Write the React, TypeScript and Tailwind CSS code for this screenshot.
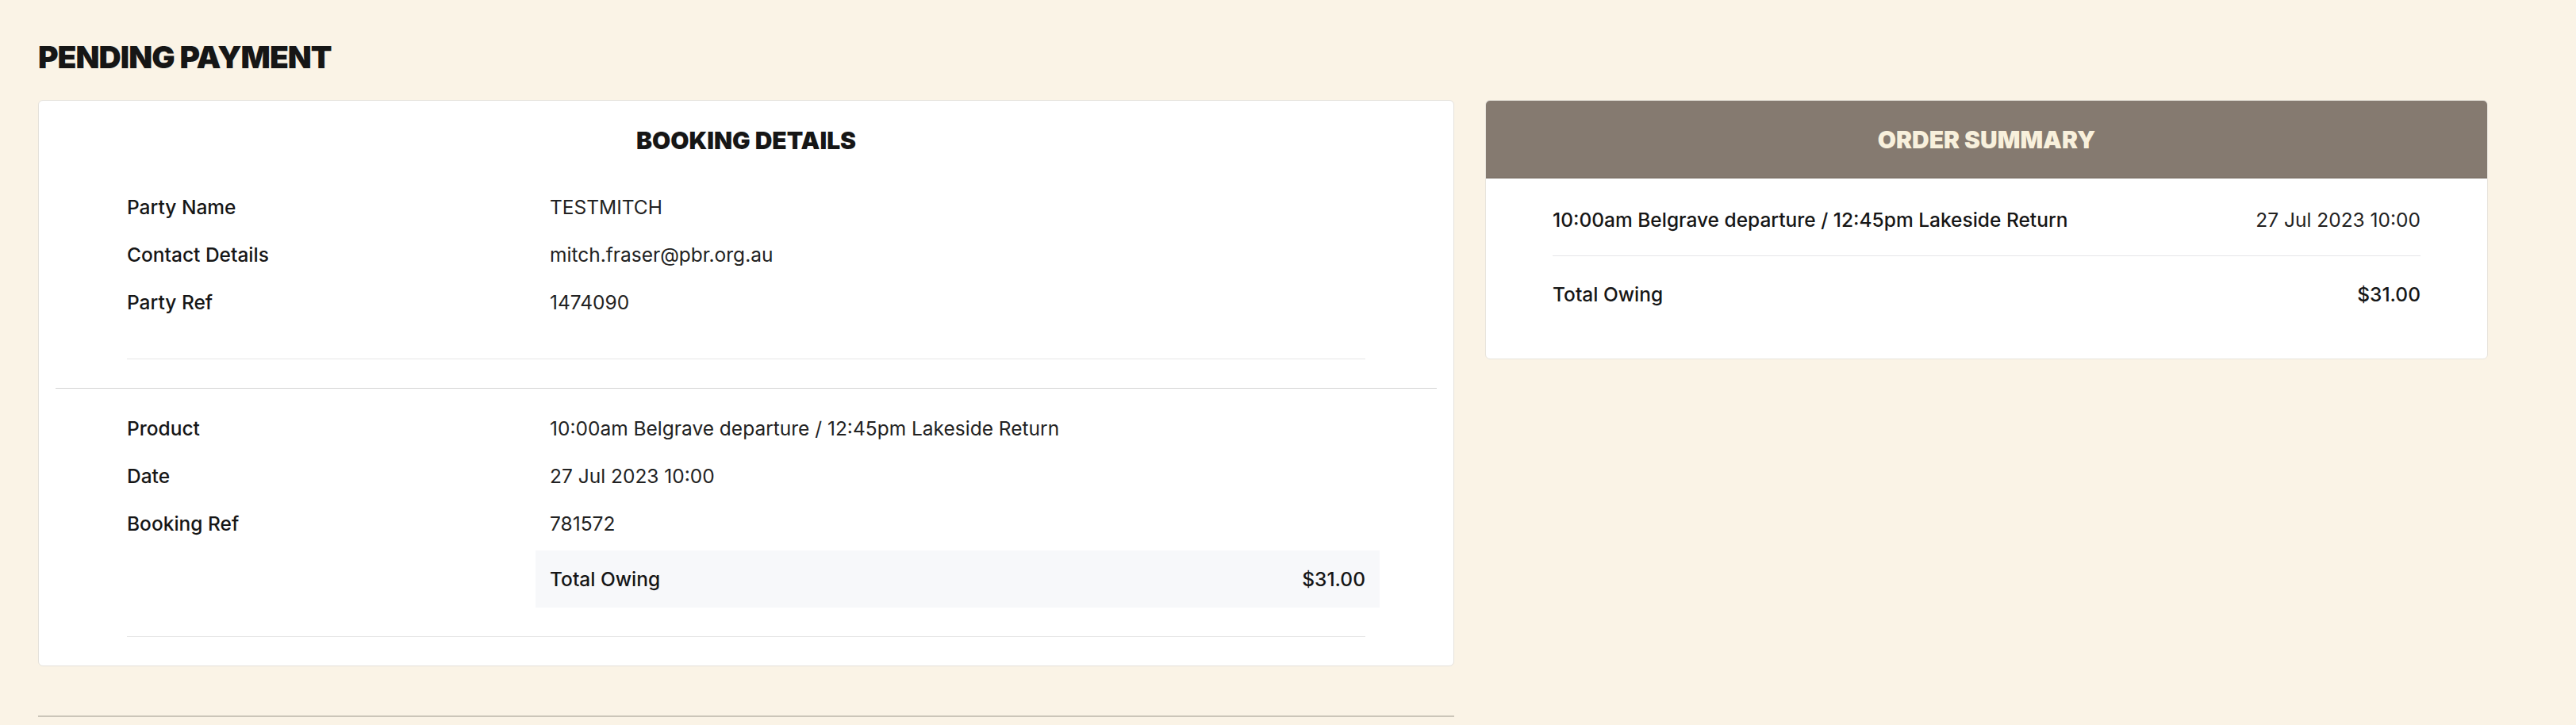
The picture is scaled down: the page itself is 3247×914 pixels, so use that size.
import React from 'react'

const PARTY_ROWS = [
  { label: 'Party Name', value: 'TESTMITCH' },
  { label: 'Contact Details', value: 'mitch.fraser@pbr.org.au' },
  { label: 'Party Ref', value: '1474090' },
]

const BOOKING_ROWS = [
  { label: 'Product', value: '10:00am Belgrave departure / 12:45pm Lakeside Return' },
  { label: 'Date', value: '27 Jul 2023 10:00' },
  { label: 'Booking Ref', value: '781572' },
]

function DetailRow({ label, value }: { label: string; value: string }) {
  return (
    <div className="grid grid-cols-[533px_1fr] py-[12px] leading-9">
      <span className="font-medium text-[#161616]">{label}</span>
      <span className="text-[#222222]">{value}</span>
    </div>
  )
}

export default function App() {
  return (
    <div className="min-h-screen bg-[#faf3e6] pl-[48px] pt-[49px] text-[24.5px] text-[#161616] font-['Inter',sans-serif]">
      <h1 className="text-[39px] leading-[46px] font-black tracking-tight uppercase">Pending Payment</h1>

      <div className="flex items-start mt-[31px]">
        <div className="w-[1785px]">
          <div className="bg-white border border-[#e4e1db] rounded-[6px] pt-[32px] pb-[36px]">
            <h2 className="text-center text-[30px] leading-[36px] font-black uppercase">Booking Details</h2>

            <div className="mx-[111px] mt-[36px]">
              {PARTY_ROWS.map((r) => (
                <DetailRow key={r.label} {...r} />
              ))}
              <div className="h-px bg-[#e6e6e6] mt-[41px]" />
            </div>

            <div className="mx-[21px] mt-[36px] h-px bg-[#d4d4d4]" />

            <div className="mx-[111px] mt-[20px]">
              {BOOKING_ROWS.map((r) => (
                <DetailRow key={r.label} {...r} />
              ))}
              <div className="grid grid-cols-[533px_1fr] mt-[4px]">
                <div />
                <div className="-mx-[18px] px-[18px] py-[18px] bg-[#f7f8fa] flex justify-between leading-9 font-medium">
                  <span>Total Owing</span>
                  <span>$31.00</span>
                </div>
              </div>
              <div className="h-px bg-[#e6e6e6] mt-[36px]" />
            </div>
          </div>
          <div className="mt-[62px] h-[2px] bg-[#cbc5b9]" />
        </div>

        <div className="w-[1264px] ml-[39px] bg-white border border-[#e8e4dc] rounded-[6px] overflow-hidden">
          <div className="h-[98px] bg-[#857a70] border-b border-[#71665d] flex items-center justify-center">
            <h2 className="text-[30px] leading-[36px] font-black uppercase text-[#f8f0dc]">Order Summary</h2>
          </div>
          <div className="px-[84px]">
            <div className="flex justify-between leading-9 pt-[34px] pb-[27px] border-b border-[#e5e5e8]">
              <span className="font-medium">10:00am Belgrave departure / 12:45pm Lakeside Return</span>
              <span className="text-[#222222]">27 Jul 2023 10:00</span>
            </div>
            <div className="flex justify-between leading-9 pt-[30px] pb-[63px] font-medium">
              <span>Total Owing</span>
              <span>$31.00</span>
            </div>
          </div>
        </div>
      </div>
    </div>
  )
}
